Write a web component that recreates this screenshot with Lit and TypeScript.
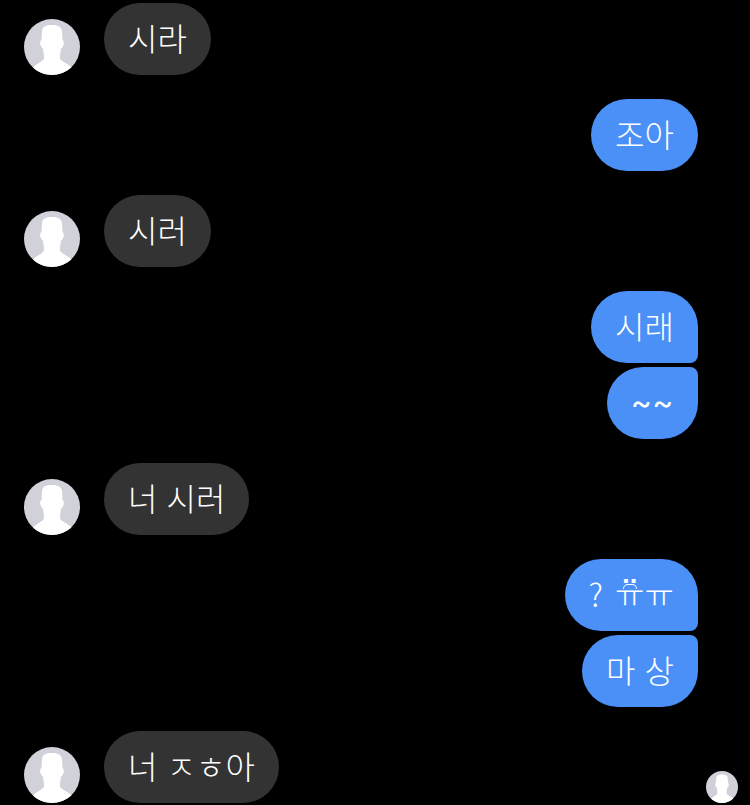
import { LitElement, html, css } from "lit";
import { customElement } from "lit/decorators.js";

const avatar = (cls: string) => html`<svg class=${cls} viewBox="0 0 56 56" aria-hidden="true">
  <circle cx="28" cy="28" r="28" fill="#d1d2d9"></circle>
  <path fill="#fff" d="M27.500 6C22 6 18.500 7.500 18 12L17.500 21C16 21.500 15.800 24 16.500 26C17 28 18 29 19 29.500C19.500 33 20 36 20 39.500C18.500 43 12.500 44.500 9 48.500C14 53.300 21 56 28 56S42.500 53 47.500 48.500C44 44.500 37.500 43 36 39.500C36 36 36.500 33 37 29.500C38 29 39 28 39.500 26C40 24 40 21.500 38.500 21L38 12C37.500 7.500 33 6 27.500 6Z"></path>
</svg>`;

@customElement("app-root")
export class AppRoot extends LitElement {
  static styles = css`
    :host {
      display: block;
      width: 750px;
      height: 805px;
      overflow: hidden;
      background: #000;
      font-family: "Noto Sans CJK KR", "Noto Sans", sans-serif;
      font-weight: 300;
    }
    .thread {
      display: flex;
      flex-direction: column;
      padding-top: 3px;
    }
    .row {
      display: flex;
      align-items: flex-end;
      margin-bottom: 24px;
    }
    .in {
      padding-left: 24px;
      gap: 24px;
    }
    .out {
      flex-direction: column;
      align-items: flex-end;
      gap: 4px;
      padding-right: 52px;
    }
    .avatar {
      width: 56px;
      height: 56px;
      flex: none;
      display: block;
    }
    .seen {
      width: 32px;
      height: 32px;
      flex: none;
      display: block;
      margin-left: auto;
      margin-right: 12px;
    }
    .bubble {
      height: 72px;
      box-sizing: border-box;
      padding: 0 24px 4px;
      border-radius: 36px;
      display: flex;
      align-items: center;
      color: #fff;
      font-size: 32px;
      line-height: 68px;
      white-space: pre;
      word-spacing: 2px;
    }
    .in .bubble {
      background: #333333;
    }
    .out .bubble {
      background: #4a90f7;
    }
    .first {
      border-bottom-right-radius: 8px;
    }
    .last {
      border-top-right-radius: 8px;
    }
    .tilde {
      font-family: "Inter", sans-serif;
      font-weight: 400;
      letter-spacing: 0.5px;
      padding-bottom: 0;
    }
    .mark {
      display: inline-block;
      position: relative;
      margin-left: 3px;
    }
    .arch {
      position: absolute;
      left: 50%;
      top: 25px;
      width: 14px;
      height: 5px;
      margin-left: -7px;
      box-sizing: border-box;
      border: 1.500px solid #fff;
      border-bottom: 0;
      border-radius: 7px 7px 0 0;
    }
    .dots {
      position: absolute;
      left: 50%;
      top: 16px;
      transform: translateX(-50%);
      font-family: "Liberation Sans", sans-serif;
      font-weight: 700;
      font-size: 36px;
      line-height: 36px;
    }
  `;

  render() {
    return html`<div class="thread">
      <div class="row in">${avatar("avatar")}<div class="bubble">시라</div></div>
      <div class="row out"><div class="bubble">조아</div></div>
      <div class="row in">${avatar("avatar")}<div class="bubble">시러</div></div>
      <div class="row out">
        <div class="bubble first">시래</div>
        <div class="bubble last tilde">~~</div>
      </div>
      <div class="row in">${avatar("avatar")}<div class="bubble">너 시러</div></div>
      <div class="row out">
        <div class="bubble first"><span>? <span class="mark">ㅠ<span class="arch"></span><span class="dots">¨</span></span>ㅠ</span></div>
        <div class="bubble last">마 상</div>
      </div>
      <div class="row in">${avatar("avatar")}<div class="bubble">너 ㅈㅎ아</div>${avatar("seen")}</div>
    </div>`;
  }
}
